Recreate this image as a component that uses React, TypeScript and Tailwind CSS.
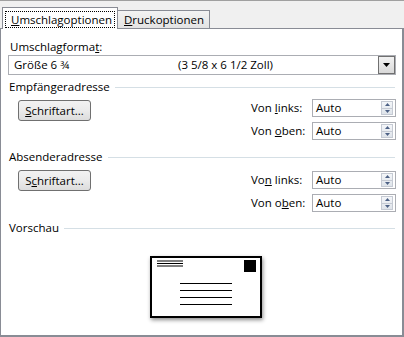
import React from "react";

function SpinArrow({ up }: { up?: boolean }) {
  return (
    <svg width="5" height="3" viewBox="0 0 5 3" className="block">
      {up ? <polygon points="0,3 5,3 2.5,0" fill="#4d6185" /> : <polygon points="0,0 5,0 2.5,3" fill="#4d6185" />}
    </svg>
  );
}

function SpinInput() {
  return (
    <div className="h-[18px] border border-[#abadb3] bg-white flex items-center pl-[3px] pr-[2px]">
      <span className="flex-1 leading-none text-black">Auto</span>
      <div className="w-[12px] h-[14px] flex flex-col border border-[#c5cad3] bg-gradient-to-b from-[#f4f6f9] to-[#dfe4ea]">
        <div className="flex-1 flex items-center justify-center border-b border-[#c5cad3]">
          <SpinArrow up />
        </div>
        <div className="flex-1 flex items-center justify-center">
          <SpinArrow />
        </div>
      </div>
    </div>
  );
}

function FontButton({ label }: { label: React.ReactNode }) {
  return (
    <button className="ml-[10px] w-[73px] h-[21px] rounded-[3px] border border-[#707070] bg-gradient-to-b from-[#f2f2f2] via-[#ebebeb] to-[#dcdcdc] text-black leading-none flex items-center justify-center">
      {label}
    </button>
  );
}

function GroupHeader({ title, className }: { title: string; className?: string }) {
  return (
    <div className={`flex items-center h-[14px] ${className ?? ""}`}>
      <span className="ml-[1px] leading-none">{title}</span>
      <div className="flex-1 h-px bg-[#d5dfe5] ml-[5px] mr-px" />
    </div>
  );
}

function Position({ first, second }: { first: React.ReactNode; second: React.ReactNode }) {
  return (
    <div className="ml-auto grid grid-cols-[61px_84px] gap-y-[5px] items-center">
      <span className="leading-none">{first}</span>
      <SpinInput />
      <span className="leading-none">{second}</span>
      <SpinInput />
    </div>
  );
}

export default function App() {
  return (
    <div className="w-[404px] h-[337px] bg-[#f0f0f0] border-t border-[#a0a0a0] flex flex-col font-['Open_Sans',sans-serif] text-[11.5px] text-black overflow-hidden">
      {/* Tabs */}
      <div className="h-[27px] flex items-end pl-[2px] relative z-10">
        <div className="w-[116px] h-[22px] -mb-px bg-white border border-b-0 border-[#898c95] pl-[2px] pr-[2px] pt-[3px]">
          <div className="h-[17px] border border-dotted border-black flex items-center pl-[5px]">
            <span className="leading-none">
              <u>U</u>mschlagoptionen
            </span>
          </div>
        </div>
        <div className="w-[92px] h-[18px] border border-l-0 border-b-0 border-[#898c95] bg-gradient-to-b from-[#f3f3f3] to-[#e3e3e3] flex items-center pl-[6px]">
          <span className="leading-none">
            <u>D</u>ruckoptionen
          </span>
        </div>
      </div>

      {/* Panel */}
      <div className="flex-1 bg-white border-t border-l border-r-2 border-b-2 border-[#898c95] pl-[7px] pr-[6px] flex flex-col">
        <div className="mt-[11px] h-[14px] flex items-center pl-[2px]">
          <span className="leading-none">
            Umschlagforma<u>t</u>:
          </span>
        </div>
        <div className="mt-px h-[20px] border border-[#abadb3] flex items-center">
          <span className="w-[169px] pl-[5px] leading-none">Größe 6 ¾</span>
          <span className="flex-1 leading-none">(3 5/8 x 6 1/2 Zoll)</span>
          <div className="w-[17px] h-[18px] border border-[#707070] bg-gradient-to-b from-[#f2f2f2] to-[#d9d9d9] flex items-center justify-center">
            <svg width="7" height="4" viewBox="0 0 7 4">
              <polygon points="0,0 7,0 3.5,4" fill="#000" />
            </svg>
          </div>
        </div>

        <GroupHeader title="Empfängeradresse" className="mt-[5px]" />
        <div className="mt-[5px] flex items-start">
          <div className="mt-px">
            <FontButton label={<><u>S</u>chriftart...</>} />
          </div>
          <Position first={<>Von <u>l</u>inks:</>} second={<>Von <u>o</u>ben:</>} />
        </div>

        <GroupHeader title="Absenderadresse" className="mt-[10px]" />
        <div className="mt-[6px] flex items-start">
          <FontButton label={<>S<u>c</u>hriftart...</>} />
          <div className="ml-auto mt-px">
            <Position first={<>Vo<u>n</u> links:</>} second={<>Von o<u>b</u>en:</>} />
          </div>
        </div>

        <GroupHeader title="Vorschau" className="mt-[9px]" />
        <div className="mt-[21px] pl-[142px]">
          <div className="w-[112px] h-[62px] border-2 border-black bg-white shadow-[1px_2px_4px_rgba(0,0,0,0.45)]">
            <svg width="108" height="58" viewBox="0 0 108 58" className="block">
              <rect x="5" y="2.5" width="26" height="1" fill="#000" />
              <rect x="5" y="5" width="26" height="1" fill="#000" />
              <rect x="5" y="7.5" width="26" height="1" fill="#000" />
              <rect x="92" y="2" width="12" height="12" fill="#000" />
              <rect x="28" y="25" width="52" height="1" fill="#000" />
              <rect x="28" y="32" width="52" height="1" fill="#000" />
              <rect x="28" y="39" width="52" height="1" fill="#000" />
              <rect x="28" y="46" width="52" height="1" fill="#000" />
            </svg>
          </div>
        </div>
      </div>
    </div>
  );
}
